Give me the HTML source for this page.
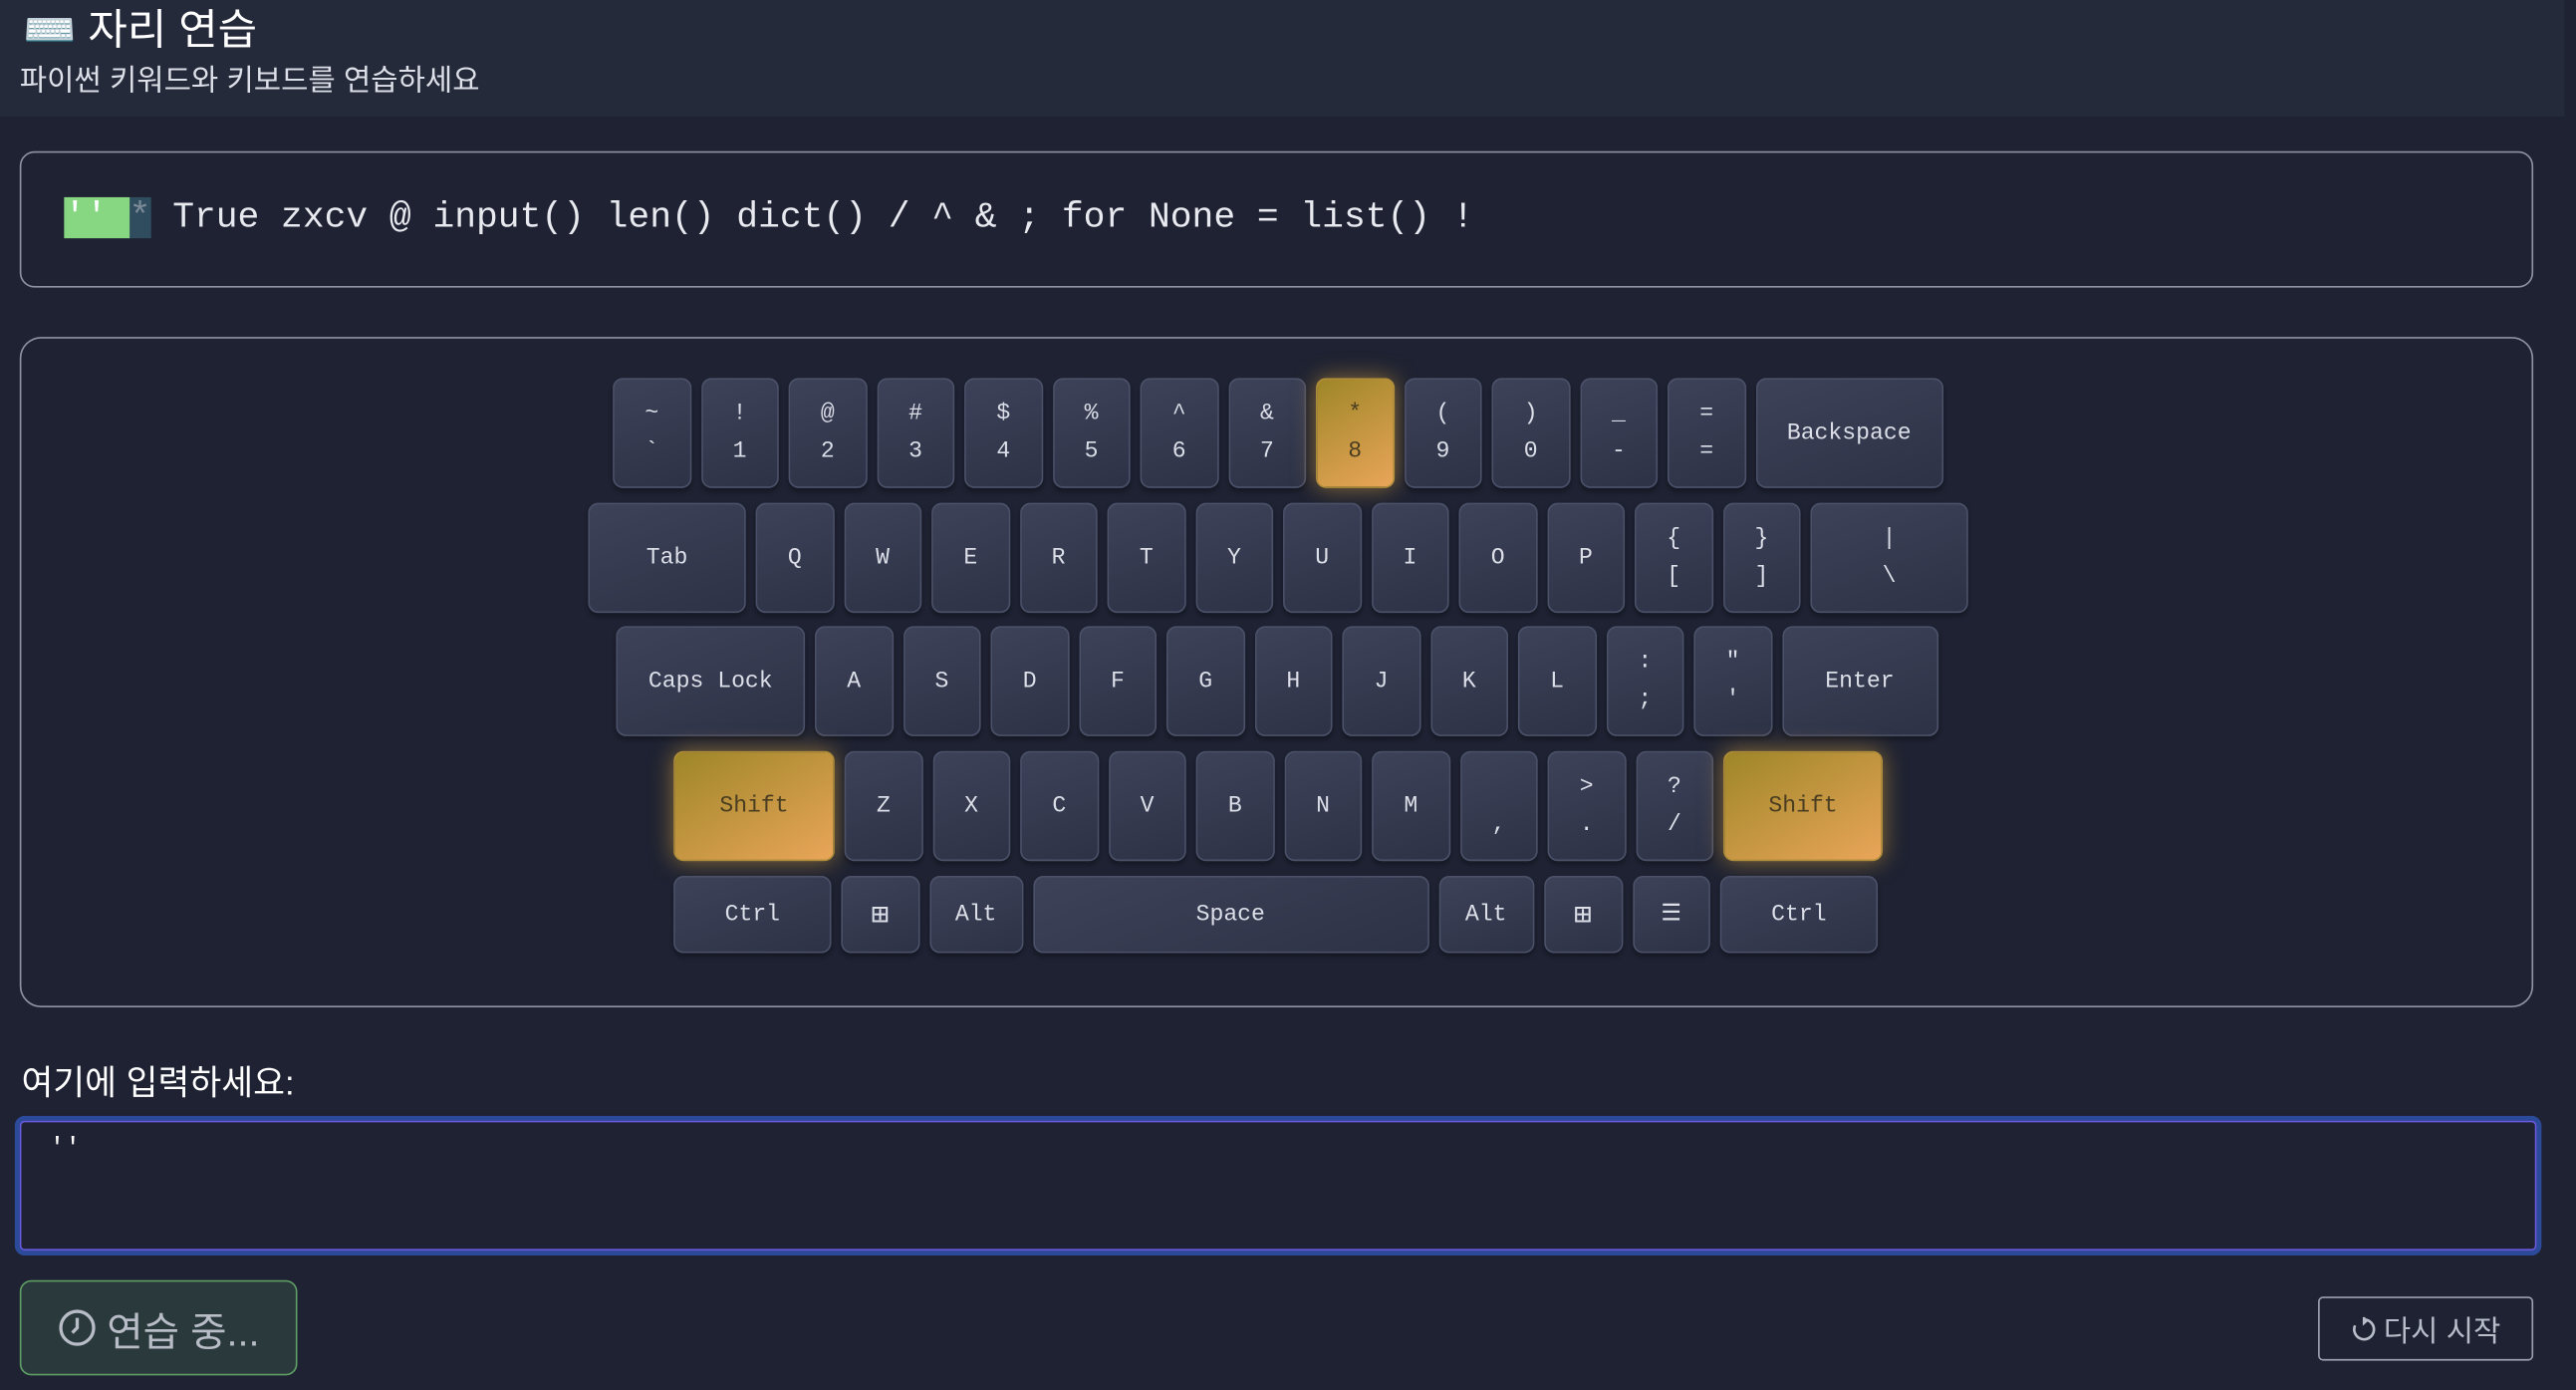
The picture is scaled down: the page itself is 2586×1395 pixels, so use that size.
<!DOCTYPE html>
<html><head><meta charset="utf-8"><style>
html,body{margin:0;padding:0;background:#1e2232;overflow:hidden;}
#w{width:1568px;height:846px;transform:scale(1.64923);transform-origin:0 0;position:relative;font-family:"Liberation Sans","Noto Sans CJK KR",sans-serif;color:#e6e8ef;}
.hdr{position:absolute;left:0;top:0;width:1561px;height:71px;background:#252a3a;}
.t{position:absolute;left:14px;top:-2px;font-size:26px;color:#fff;}
.s{position:absolute;left:12px;top:35px;font-size:18px;color:#dde0e8;}
.box{position:absolute;left:12px;width:1528px;border:1.5px solid #8e93a3;border-radius:9px;}
.tgt{top:92px;height:81px;font-family:"Liberation Mono",monospace;font-size:22px;}
.tgt .line{position:absolute;left:26px;top:27px;white-space:pre;color:#e8eaf0;}
.g{background:#86d682;color:#fff;}
.c{background:#2f4d5e;color:#7d8a99;}
.kb{top:205px;height:406px;border-radius:13px;}
.row{position:absolute;display:flex;gap:6px;}
.k{box-sizing:border-box;height:67px;width:47.5px;border:1.5px solid #4b5169;border-radius:6px;background:linear-gradient(160deg,#3d4259,#2d3246);font-family:"Liberation Mono",monospace;font-size:14px;color:#dcdfe8;display:flex;flex-direction:column;align-items:center;justify-content:center;box-shadow:0 2px 3px rgba(0,0,0,.3);}
.k span{line-height:23px}
.h{background:linear-gradient(150deg,#9e8628,#e9a559);border-color:#b08d3a;color:#4a3d20;box-shadow:0 0 14px rgba(230,170,60,.55);}
.lab{position:absolute;left:13px;top:643px;font-size:21px;color:#fff;}
.ta{position:absolute;left:9px;top:679px;width:1532px;height:79px;border:3px solid #2c4a9a;border-radius:6px;}
.ta div{position:absolute;inset:0;border:1.5px solid #6a5ae0;border-radius:3px;}
.ta span{position:absolute;left:18px;top:8px;font-family:"Liberation Mono",monospace;font-size:16px;color:#fff;}
.b1{position:absolute;left:12px;top:779px;width:167px;height:56px;border:1.5px solid #5e9e64;border-radius:7px;background:#2a3a3c;color:#b8bcc6;font-size:24px;display:flex;align-items:center;justify-content:center;gap:6px;}
.b2{position:absolute;left:1411px;top:789px;width:129px;height:37px;border:1.5px solid #9aa0b0;border-radius:3px;color:#b8bdca;font-size:18px;display:flex;align-items:center;justify-content:center;gap:4px;}
</style></head><body><div id="w">
<div class="hdr"></div>
<div class="t">⌨️ 자리 연습</div>
<div class="s">파이썬 키워드와 키보드를 연습하세요</div>
<div class="box tgt"><div class="line"><span class="g">'' </span><span class="c">*</span> True zxcv @ input() len() dict() / ^ &amp; ; for None = list() !</div></div>
<div class="box kb"></div>
<div class="row" style="left:373px;top:230px">
<div class="k"><span>~</span><span>`</span></div><div class="k"><span>!</span><span>1</span></div><div class="k"><span>@</span><span>2</span></div><div class="k"><span>#</span><span>3</span></div><div class="k"><span>$</span><span>4</span></div><div class="k"><span>%</span><span>5</span></div><div class="k"><span>^</span><span>6</span></div><div class="k"><span>&amp;</span><span>7</span></div><div class="k h"><span>*</span><span>8</span></div><div class="k"><span>(</span><span>9</span></div><div class="k"><span>)</span><span>0</span></div><div class="k"><span>_</span><span>-</span></div><div class="k"><span>=</span><span>=</span></div><div class="k" style="width:114px">Backspace</div></div>
<div class="row" style="left:358px;top:306px">
<div class="k" style="width:96px">Tab</div><div class="k">Q</div><div class="k">W</div><div class="k">E</div><div class="k">R</div><div class="k">T</div><div class="k">Y</div><div class="k">U</div><div class="k">I</div><div class="k">O</div><div class="k">P</div><div class="k"><span>{</span><span>[</span></div><div class="k"><span>}</span><span>]</span></div><div class="k" style="width:96px"><span>|</span><span>\</span></div></div>
<div class="row" style="left:375px;top:381px">
<div class="k" style="width:115px">Caps Lock</div><div class="k">A</div><div class="k">S</div><div class="k">D</div><div class="k">F</div><div class="k">G</div><div class="k">H</div><div class="k">J</div><div class="k">K</div><div class="k">L</div><div class="k"><span>:</span><span>;</span></div><div class="k"><span>"</span><span>'</span></div><div class="k" style="width:95px">Enter</div></div>
<div class="row" style="left:410px;top:457px">
<div class="k h" style="width:98px">Shift</div><div class="k">Z</div><div class="k">X</div><div class="k">C</div><div class="k">V</div><div class="k">B</div><div class="k">N</div><div class="k">M</div><div class="k"><span>&nbsp;</span><span>,</span></div><div class="k"><span>&gt;</span><span>.</span></div><div class="k"><span>?</span><span>/</span></div><div class="k h" style="width:97px">Shift</div></div>
<div class="row" style="left:410px;top:533px">
<div class="k" style="width:96px;height:47px">Ctrl</div><div class="k" style="height:47px;font-size:18px">⊞</div><div class="k" style="width:57px;height:47px">Alt</div><div class="k" style="width:241px;height:47px">Space</div><div class="k" style="width:58px;height:47px">Alt</div><div class="k" style="width:48px;height:47px;font-size:18px">⊞</div><div class="k" style="height:47px">☰</div><div class="k" style="width:96px;height:47px">Ctrl</div></div>
<div class="lab">여기에 입력하세요:</div>
<div class="ta"><div></div><span>''</span></div>
<div class="b1"><svg width="24" height="24" viewBox="0 0 24 24" fill="none" stroke="#b8bcc6" stroke-width="2"><circle cx="12" cy="12" r="10"/><path d="M12 6v6l-3 3"/></svg>연습 중...</div>
<div class="b2"><svg width="16" height="16" viewBox="0 0 16 16" fill="none" stroke="#b8bdca" stroke-width="1.6"><path d="M8 2a6 6 0 1 1-5.5 3.6"/><path d="M8 0.5v3.5l2-1.8"/></svg>다시 시작</div>
</div></body></html>
